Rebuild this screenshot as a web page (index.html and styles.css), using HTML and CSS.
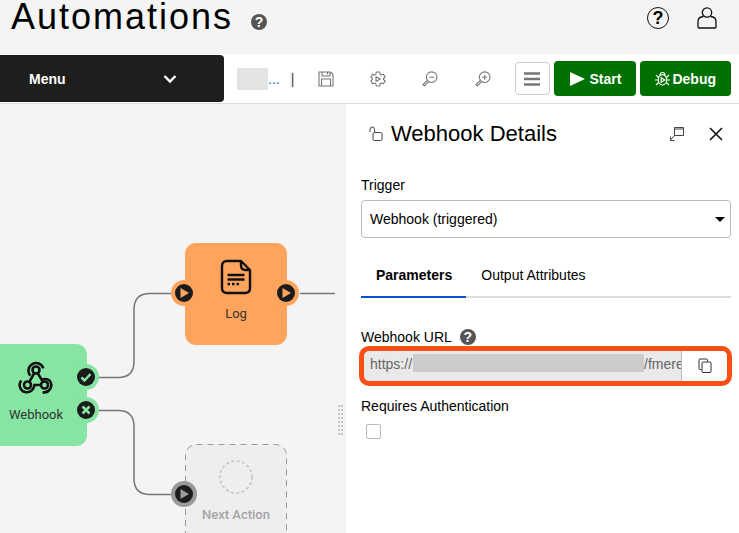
FILE: index.html
```html
<!DOCTYPE html>
<html lang="en">
<head>
  <meta charset="UTF-8">
  <meta name="viewport" content="width=device-width, initial-scale=1.0">
  <title>Automations</title>
  <link rel="stylesheet" href="styles.css">
</head>
<body>
  <header class="page-header">
    <h1>Automations</h1>
    <button type="button" class="help">?</button>
    <div class="account">
      <button type="button" class="help-outline">?</button>
      <button type="button" class="icon-btn" aria-label="Account">
        <svg width="20" height="22" viewBox="0 0 20 22" fill="none" stroke="#111" stroke-width="1.3">
          <circle cx="10" cy="5.5" r="4.700"/>
          <path d="M6.500 9.500C3 9.700 1 11.500 1 14.500V20q0 1 1 1h16q1 0 1-1v-5.500c0-3-2-4.800-5.500-5"/>
        </svg>
      </button>
    </div>
  </header>

  <nav class="toolbar">
    <button type="button" class="menu">
      Menu
      <svg width="14" height="10" viewBox="0 0 14 10" fill="none" stroke="#fff" stroke-width="2.4"><path d="M1.500 2l5.500 5.500L12.500 2"/></svg>
    </button>
    <div class="crumb"><span class="redacted"></span><a href="#">...</a></div>
    <span class="divider">|</span>
    <div class="tools">
      <button type="button" class="icon-btn" aria-label="Save">
        <svg width="16" height="16" viewBox="0 0 16 16" fill="none" stroke="#777" stroke-width="1.100"><path d="M1 1h11.500L15 3.500V15H1zM4 1v4h8V1M9.500 1.500v2M3.500 15V8h9v7"/></svg>
      </button>
      <button type="button" class="icon-btn" aria-label="Settings">
        <svg width="16" height="16" viewBox="0 0 16 16" fill="none" stroke="#777" stroke-width="1.100" stroke-linejoin="round"><path d="M6.300 1h3.400l.4 2.200 1.300.8 2.100-.8 1.700 2.900L13.500 7.500v1l1.700 1.400-1.700 2.900-2.100-.8-1.300.8L9.700 15H6.300l-.4-2.200-1.300-.8-2.100.8L.8 9.900l1.700-1.400v-1L.8 6.100l1.700-2.900 2.100.8 1.300-.8z"/><path d="M6 5.800L10.300 8 6 10.200z"/></svg>
      </button>
      <button type="button" class="icon-btn" aria-label="Zoom out">
        <svg width="16" height="16" viewBox="0 0 16 16" fill="none" stroke="#777" stroke-width="1.100"><circle cx="9.700" cy="6.200" r="5.300"/><path d="M7.200 6.200h5M5.400 9.400L1 13.600l1.300 1.300 4.400-4.200"/></svg>
      </button>
      <button type="button" class="icon-btn" aria-label="Zoom in">
        <svg width="16" height="16" viewBox="0 0 16 16" fill="none" stroke="#777" stroke-width="1.100"><circle cx="9.700" cy="6.200" r="5.300"/><path d="M7.200 6.200h5M9.700 3.700v5M5.400 9.400L1 13.600l1.300 1.300 4.400-4.200"/></svg>
      </button>
    </div>
    <div class="actions">
      <button type="button" class="list-btn" aria-label="List">
        <svg width="18" height="16" viewBox="0 0 18 16" stroke="#777" stroke-width="2.500"><path d="M1 2.500h16M1 8h16M1 13.500h16"/></svg>
      </button>
      <button type="button" class="run start">
        <svg width="16" height="14" viewBox="0 0 16 14" fill="#fff"><path d="M1 0l15 7-15 7z"/></svg>
        Start
      </button>
      <button type="button" class="run debug">
        <svg width="15" height="15" viewBox="0 0 15 15" fill="none" stroke="#fff" stroke-width="1.200"><ellipse cx="7.500" cy="8.800" rx="4.200" ry="5.200"/><path d="M5 4.500C5 .5 10 .5 10 4.500M3.500 6.500L1 4M3.300 9H0M3.600 11.500L1 14M11.500 6.500L14 4M11.700 9H15M11.400 11.500L14 14"/><path d="M6.200 6.800L9.800 9l-3.600 2.200z"/></svg>
        Debug
      </button>
    </div>
  </nav>

  <main class="workspace">
    <section class="canvas">
      <svg class="wires" width="346" height="429" viewBox="0 0 346 429">
        <path d="M98 273.500h20q16 0 16-16v-52q0-16 16-16h22"/>
        <path d="M300 189.500h35"/>
        <path d="M98 306.500h20q16 0 16 16v52q0 16 16 16h22"/>
      </svg>

      <div class="node webhook">
        <svg width="36" height="36" viewBox="0 0 36 36" fill="none" stroke="#111" stroke-width="2.600">
          <circle cx="18" cy="10" r="3.500"/><circle cx="9.500" cy="25" r="3.500"/><circle cx="26.500" cy="25" r="3.500"/>
          <path d="M16.300 13.200l-5 8.600M19.700 13.200l4 6.600q4.400-2 7.800.7a7.200 7.200 0 0 1-6.900 11.700M23 25h-6.500q-1.400 6.700-7.200 7.200a7.200 7.200 0 0 1-6-11.700M12.400 15.700A7.600 7.600 0 1 1 25.300 8.300"/>
        </svg>
        <span>Webhook</span>
      </div>
      <div class="node log">
        <svg width="32" height="36" viewBox="0 0 32 36" fill="none" stroke="#111" stroke-width="2.400">
          <path d="M7 2h14l9 9v18q0 5-5 5H7q-5 0-5-5V7q0-5 5-5z" stroke-linejoin="round"/>
          <path d="M21 2v4.500q0 4.500 4.500 4.500H30M7.500 16h17M7.500 20.500h17"/>
          <path d="M7.500 25h12" stroke-dasharray="2.500 2"/>
        </svg>
        <span>Log</span>
      </div>
      <div class="node next">
        <svg class="outline" width="102" height="102"><rect x="0.500" y="0.500" width="101" height="101" rx="11"/></svg>
        <svg width="36" height="36" viewBox="0 0 36 36" fill="none" stroke="#c4c4c4" stroke-width="1.500" stroke-dasharray="3 2.400"><circle cx="18" cy="17" r="16"/></svg>
        <span>Next Action</span>
      </div>

      <svg class="port success" viewBox="0 0 26 26"><circle cx="13" cy="13" r="13"/><circle class="core" cx="13" cy="13" r="9"/><path class="mark" d="M8.500 13.500l3 3 6-6.500"/></svg>
      <svg class="port failure" viewBox="0 0 26 26"><circle cx="13" cy="13" r="13"/><circle class="core" cx="13" cy="13" r="9"/><path class="mark" d="M9.500 9.500l7 7M16.500 9.500l-7 7"/></svg>
      <svg class="port log-in" viewBox="0 0 26 26"><circle cx="13" cy="13" r="13"/><circle class="core" cx="13" cy="13" r="9"/><path d="M9.500 8l8.500 5-8.500 5z"/></svg>
      <svg class="port log-out" viewBox="0 0 26 26"><circle cx="13" cy="13" r="13"/><circle class="core" cx="13" cy="13" r="9"/><path d="M9.500 8l8.500 5-8.500 5z"/></svg>
      <svg class="port next-in" viewBox="0 0 26 26"><circle cx="13" cy="13" r="13"/><circle class="core" cx="13" cy="13" r="9"/><path d="M9.500 8l8.500 5-8.500 5z"/></svg>
      <div class="grip"></div>
    </section>

    <aside class="panel">
      <div class="panel-title">
        <svg width="14" height="16" viewBox="0 0 14 16" fill="none" stroke="#444"><rect x="4" y="6.500" width="9" height="8" rx="1.500"/><path d="M1 6V3.500q0-2.500 2.300-2.500t2.300 2.500v3"/></svg>
        <h2>Webhook Details</h2>
        <button type="button" class="icon-btn" aria-label="Pop out">
          <svg width="16" height="16" viewBox="0 0 16 16" fill="none" stroke="#444"><path d="M5.500 9.500v-8h9v8zM5.500 9.500L1.500 14M1.500 10.500v4h4M5.500 3h9"/></svg>
        </button>
        <button type="button" class="icon-btn" aria-label="Close">
          <svg width="14" height="14" viewBox="0 0 14 14" fill="none" stroke="#111" stroke-width="1.600"><path d="M1 1l12 12M13 1L1 13"/></svg>
        </button>
      </div>

      <label for="trigger">Trigger</label>
      <div class="select-wrap">
        <select id="trigger">
          <option>Webhook (triggered)</option>
        </select>
      </div>

      <div class="tabs">
        <button type="button" class="tab active">Parameters</button>
        <button type="button" class="tab">Output Attributes</button>
      </div>

      <div class="label-row">
        <label for="url">Webhook URL</label>
        <button type="button" class="help">?</button>
      </div>
      <div class="url-group">
        <input type="text" id="url" class="url-start" value="https://" readonly>
        <span class="redacted"></span>
        <input type="text" class="url-end" value="/fmerest" aria-label="Webhook URL path" readonly>
        <button type="button" class="copy" aria-label="Copy">
          <svg width="14" height="16" viewBox="0 0 14 16" fill="none" stroke="#333"><rect x="4" y="4" width="9" height="10.500" rx="1"/><path d="M3.500 11.500H2q-1 0-1-1V2q0-1 1-1h6.500q1 0 1 1v1.500"/></svg>
        </button>
      </div>

      <label for="auth">Requires Authentication</label>
      <input type="checkbox" id="auth">
    </aside>
  </main>
</body>
</html>
```

FILE: styles.css
```css
* {
  box-sizing: border-box;
}
body {
  margin: 0;
  min-height: 100vh;
  display: flex;
  flex-direction: column;
  font-family: "Liberation Sans", Arial, sans-serif;
  font-size: 14px;
  line-height: 20px;
  color: #000;
  background-color: #f4f4f4;
}
button, input, select {
  font: inherit;
  color: inherit;
}
button {
  padding: 0;
  border: none;
  background: none;
  cursor: pointer;
}
svg {
  display: block;
  flex: none;
}
h1, h2 {
  margin: 0;
  font-weight: normal;
}
.icon-btn {
  display: flex;
}

/* Header */
.page-header {
  height: 54px;
  display: flex;
  align-items: flex-start;
  padding: 0 20px 0 11px;
}
h1 {
  font-size: 36px;
  line-height: 34px;
  letter-spacing: 2px;
}
.help {
  width: 16px;
  height: 16px;
  border-radius: 50%;
  background-color: #555;
  color: #fff;
  font-size: 14px;
  line-height: 16px;
  font-weight: bold;
  text-align: center;
}
.page-header .help {
  margin: 14px 0 0 18px;
}
.account {
  display: flex;
  align-items: center;
  gap: 28px;
  margin: 7px 2px 0 auto;
}
.help-outline {
  width: 22px;
  height: 22px;
  border: 1px solid #111;
  border-radius: 50%;
  font-size: 18px;
  line-height: 20px;
  font-weight: bold;
  text-align: center;
}

/* Toolbar */
.toolbar {
  height: 50px;
  display: flex;
  align-items: center;
  padding-right: 8px;
  background-color: #fff;
  border-bottom: 1px solid #ddd;
}
.menu {
  width: 224px;
  height: 47px;
  display: flex;
  align-items: center;
  justify-content: space-between;
  padding: 0 47px 0 29px;
  border-radius: 0 4px 4px 0;
  background-color: #1e1e1c;
  color: #fff;
  font-weight: bold;
}
.crumb {
  display: flex;
  align-items: center;
  margin-left: 13px;
}
.crumb a {
  color: #0a6ebd;
  text-decoration: none;
}
.redacted {
  background-color: #e3e3e3;
}
.crumb .redacted {
  width: 31px;
  height: 22px;
}
.divider {
  margin-left: 11px;
  color: #444;
}
.tools {
  flex: 1;
  display: flex;
  justify-content: space-between;
  padding: 0 24px;
}
.actions {
  display: flex;
  align-items: center;
  gap: 4px;
}
.list-btn {
  width: 35px;
  height: 33px;
  display: flex;
  align-items: center;
  justify-content: center;
  border: 1px solid #ccc;
  border-radius: 4px;
}
.run {
  height: 35px;
  display: flex;
  align-items: center;
  padding: 0 15px;
  border-radius: 4px;
  background-color: #007000;
  color: #fff;
  font-weight: bold;
}
.start {
  gap: 5px;
}
.debug {
  gap: 2px;
}

/* Workspace */
.workspace {
  flex: 1;
  display: grid;
  grid-template-columns: 346fr 393fr;
}
.canvas {
  position: relative;
  overflow: hidden;
}
.wires {
  position: absolute;
  left: 0;
  top: 0;
  fill: none;
  stroke: #777;
  stroke-width: 1.5;
}
.node {
  position: absolute;
  width: 102px;
  height: 102px;
  display: flex;
  flex-direction: column;
  align-items: center;
  gap: 9px;
  padding-top: 16px;
  border-radius: 11px;
  font-family: Roboto, sans-serif;
  font-size: 13px;
}
.node span {
  color: #333;
}
.webhook {
  left: -15px;
  top: 240px;
  background-color: #86e5a2;
}
.log {
  left: 185px;
  top: 139px;
  background-color: #ffa45c;
}
.next {
  left: 185px;
  top: 340px;
  background-color: #eee;
}
.next span {
  color: #a5a5a5;
  font-weight: 500;
}
.outline {
  position: absolute;
  left: 0;
  top: 0;
  fill: none;
  stroke: #999;
  stroke-dasharray: 6 5;
}
.port {
  position: absolute;
  width: 26px;
  height: 26px;
  fill: #ffa45c;
}
.port .core {
  fill: #1b1b1b;
}
.port .mark {
  fill: none;
  stroke: #86e5a2;
  stroke-width: 2.5;
}
.success, .failure {
  left: 73px;
  fill: #86e5a2;
}
.success {
  top: 260px;
}
.failure {
  top: 293px;
}
.log-in, .log-out {
  top: 176px;
}
.log-in, .next-in {
  left: 171px;
}
.log-out {
  left: 273px;
}
.next-in {
  top: 377px;
  fill: #999;
}
.grip {
  position: absolute;
  right: 3px;
  top: 301px;
  width: 5px;
  height: 30px;
  background-image: conic-gradient(from 270deg at 2px 2px, #c4c4c4 90deg, transparent 0);
  background-size: 3px 4px;
}

/* Details panel */
.panel {
  padding: 18px 8px 0 15px;
  background-color: #fff;
}
.panel label {
  display: block;
}
.panel-title {
  display: flex;
  align-items: center;
  gap: 8px;
  padding: 0 8px;
  margin-bottom: 29px;
}
.panel-title .icon-btn {
  margin-left: 16px;
}
h2 {
  flex: 1;
  font-size: 22px;
  line-height: 24px;
}
.select-wrap {
  position: relative;
  margin-top: 5px;
}
.select-wrap::after {
  content: "";
  position: absolute;
  right: 6px;
  top: 17px;
  border: 5px solid transparent;
  border-top-color: #000;
  border-bottom: none;
  pointer-events: none;
}
select {
  display: block;
  width: 100%;
  height: 38px;
  padding: 0 8px;
  border: 1px solid #bbb;
  border-radius: 4px;
  background-color: #fff;
  appearance: none;
}
.tabs {
  display: flex;
  margin: 16px 0 29px;
  box-shadow: inset 0 -2px #ddd;
}
.tab {
  height: 44px;
  padding: 0 14px 0 15px;
  border-bottom: 2px solid transparent;
}
.tab.active {
  border-color: #0050d0;
  font-weight: bold;
}
.label-row {
  display: flex;
  align-items: center;
  gap: 8px;
}
.url-group {
  height: 40px;
  display: flex;
  align-items: center;
  margin: -1px -1px 10px -2px;
  border: 5px solid #fa4f14;
  border-radius: 10px;
  background-color: #e9e9e9;
  overflow: hidden;
}
.url-group input {
  min-width: 0;
  padding: 0;
  margin-bottom: 5px;
  border: none;
  background: none;
  color: #666;
}
.url-group .url-start {
  width: 43px;
  margin-left: 6px;
}
.url-group .redacted {
  flex: 1;
  height: 18px;
  margin-bottom: 6px;
  background-color: #ccc;
}
.url-group .url-end {
  width: 37px;
}
.copy {
  width: 46px;
  height: 30px;
  display: flex;
  align-items: center;
  justify-content: center;
  border-left: 1px solid #bbb;
  background-color: #fff;
}
input[type="checkbox"] {
  display: block;
  width: 15px;
  height: 15px;
  margin: 8px 5px;
  border: 1px solid #bbb;
  border-radius: 2px;
  background-color: #fff;
  appearance: none;
}
```
